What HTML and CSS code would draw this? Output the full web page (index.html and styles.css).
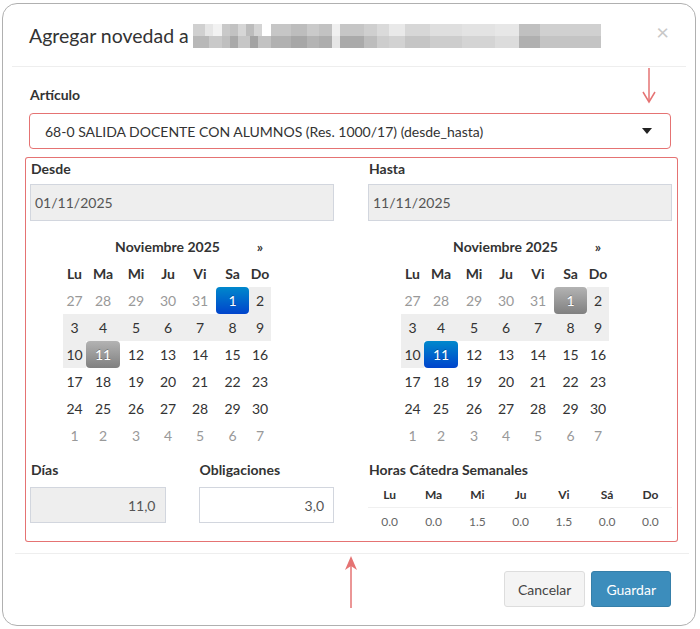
FILE: index.html
```html
<!DOCTYPE html>
<html lang="es">
<head>
    <meta charset="UTF-8">
    <title>Agregar novedad</title>
    <link rel="stylesheet" href="styles.css">
</head>
<body>

    <div class="modal">

        <!-- Header -->
        <div class="modal-header">
            <h4 class="modal-title">Agregar novedad a <span class="blurred"></span></h4>
            <span class="close">&times;</span>
        </div>

        <!-- Body -->
        <div class="modal-body">
            <label class="field-label">Artículo</label>
            <div class="select-box">
                <span>68-0 SALIDA DOCENTE CON ALUMNOS (Res. 1000/17) (desde_hasta)</span>
                <span class="caret"></span>
            </div>

            <div class="marked">
                <div class="cols">
                    <div class="col">
                        <label class="field-label">Desde</label>
                        <div class="input readonly">01/11/2025</div>
                        <div class="datepicker">
                            <div class="dp-switch">Noviembre 2025</div>
                            <div class="dp-next">&raquo;</div>
                            <div class="dow">Lu</div><div class="dow">Ma</div><div class="dow">Mi</div><div class="dow">Ju</div><div class="dow">Vi</div><div class="dow">Sa</div><div class="dow">Do</div>
                            <div class="day old">27</div><div class="day old">28</div><div class="day old">29</div><div class="day old">30</div><div class="day old">31</div><div class="day active">1</div><div class="day range">2</div>
                            <div class="day range">3</div><div class="day range">4</div><div class="day range">5</div><div class="day range">6</div><div class="day range">7</div><div class="day range">8</div><div class="day range">9</div>
                            <div class="day range">10</div><div class="day selected">11</div><div class="day">12</div><div class="day">13</div><div class="day">14</div><div class="day">15</div><div class="day">16</div>
                            <div class="day">17</div><div class="day">18</div><div class="day">19</div><div class="day">20</div><div class="day">21</div><div class="day">22</div><div class="day">23</div>
                            <div class="day">24</div><div class="day">25</div><div class="day">26</div><div class="day">27</div><div class="day">28</div><div class="day">29</div><div class="day">30</div>
                            <div class="day old">1</div><div class="day old">2</div><div class="day old">3</div><div class="day old">4</div><div class="day old">5</div><div class="day old">6</div><div class="day old">7</div>
                        </div>
                    </div>
                    <div class="col">
                        <label class="field-label">Hasta</label>
                        <div class="input readonly">11/11/2025</div>
                        <div class="datepicker">
                            <div class="dp-switch">Noviembre 2025</div>
                            <div class="dp-next">&raquo;</div>
                            <div class="dow">Lu</div><div class="dow">Ma</div><div class="dow">Mi</div><div class="dow">Ju</div><div class="dow">Vi</div><div class="dow">Sa</div><div class="dow">Do</div>
                            <div class="day old">27</div><div class="day old">28</div><div class="day old">29</div><div class="day old">30</div><div class="day old">31</div><div class="day selected">1</div><div class="day range">2</div>
                            <div class="day range">3</div><div class="day range">4</div><div class="day range">5</div><div class="day range">6</div><div class="day range">7</div><div class="day range">8</div><div class="day range">9</div>
                            <div class="day range">10</div><div class="day active">11</div><div class="day">12</div><div class="day">13</div><div class="day">14</div><div class="day">15</div><div class="day">16</div>
                            <div class="day">17</div><div class="day">18</div><div class="day">19</div><div class="day">20</div><div class="day">21</div><div class="day">22</div><div class="day">23</div>
                            <div class="day">24</div><div class="day">25</div><div class="day">26</div><div class="day">27</div><div class="day">28</div><div class="day">29</div><div class="day">30</div>
                            <div class="day old">1</div><div class="day old">2</div><div class="day old">3</div><div class="day old">4</div><div class="day old">5</div><div class="day old">6</div><div class="day old">7</div>
                        </div>
                    </div>
                </div>

                <div class="cols bottom">
                    <div class="col half-cols">
                        <div>
                            <label class="field-label">Días</label>
                            <div class="input readonly num">11,0</div>
                        </div>
                        <div>
                            <label class="field-label">Obligaciones</label>
                            <div class="input num">3,0</div>
                        </div>
                    </div>
                    <div class="col">
                        <label class="field-label">Horas Cátedra Semanales</label>
                        <table class="hours">
                            <tr><th>Lu</th><th>Ma</th><th>Mi</th><th>Ju</th><th>Vi</th><th>Sá</th><th>Do</th></tr>
                            <tr><td>0.0</td><td>0.0</td><td>1.5</td><td>0.0</td><td>1.5</td><td>0.0</td><td>0.0</td></tr>
                        </table>
                    </div>
                </div>
            </div>
        </div>

        <!-- Footer -->
        <div class="modal-footer">
            <button class="btn btn-default">Cancelar</button>
            <button class="btn btn-primary">Guardar</button>
        </div>

        <!-- Annotation arrows -->
        <svg class="arrow arrow-down" width="14" height="36" viewBox="0 0 14 36">
            <line x1="7" y1="0" x2="7" y2="34" stroke="#e57373" stroke-width="1.5"/>
            <polyline points="1,24 7,34 13,24" fill="none" stroke="#e57373" stroke-width="1.5"/>
        </svg>
        <svg class="arrow arrow-up" width="16" height="52" viewBox="0 0 16 52">
            <line x1="8" y1="4" x2="8" y2="52" stroke="#e57373" stroke-width="1.5"/>
            <polygon points="8,0 2,14 8,10 14,14" fill="#e57373"/>
        </svg>
    </div>

</body>
</html>
```

FILE: styles.css
```css
body {
    margin: 0;
    background-color: #fff;
    font-family: Lato, "Liberation Sans", sans-serif;
    color: #333;
    font-size: 14px;
}

.modal {
    position: relative;
    box-sizing: border-box;
    width: 694px;
    height: 623px;
    margin: 3px 0 0 2px;
    border: 1px solid #b0b0b0;
    border-radius: 15px;
    background: #fff;
}

.modal-header {
    position: relative;
    height: 62px;
    margin: 0 9px;
    padding: 0 17px;
    border-bottom: 1px solid #eee;
    display: flex;
    align-items: center;
}

.modal-title {
    margin: 0;
    font-size: 19.5px;
    font-weight: normal;
    color: #333;
    display: flex;
    align-items: center;
    gap: 4px;
}

/* pixelated (hidden) name */
.blurred {
    display: inline-block;
    width: 408px;
    height: 24px;
    margin-top: 2px;
    background:
        linear-gradient(90deg, #d0d0d0 0 3%, #e6e6e6 3% 5%, #f2f2f2 5% 7%, #c9c9c9 7% 9%, #c2c2c2 9% 11%, #d6d6d6 11% 13%, #bcbcbc 13% 15%, #d4d4d4 15% 17%, #fff 17% 19%, #c6c6c6 19% 24%, #bdbdbd 24% 28%, #cacaca 28% 31%, #c2c2c2 31% 34%, #f0f0f0 34% 36%, #c6c6c6 36% 42%, #cfcfcf 42% 45%, #dadada 45% 48%, #e9e9e9 48% 52%, #d7d7d7 52% 58%, #dfdfdf 58% 66%, #e3e3e3 66% 74%, #e7e7e7 74% 80%, #c0c0c0 80% 85%, #d0d0d0 85% 100%) top / 100% 50% no-repeat,
        linear-gradient(90deg, #b8b8b8 0 4%, #c9c9c9 4% 7%, #bfbfbf 7% 9%, #a9a9a9 9% 11%, #c6c6c6 11% 14%, #a3a3a3 14% 16%, #c2c2c2 16% 19%, #b1b1b1 19% 24%, #a7a7a7 24% 28%, #b4b4b4 28% 31%, #adadad 31% 34%, #e6e6e6 34% 36%, #aaaaaa 36% 42%, #bdbdbd 42% 45%, #cdcdcd 45% 48%, #d2d2d2 48% 52%, #c5c5c5 52% 58%, #cdcdcd 58% 66%, #d4d4d4 66% 74%, #dcdcdc 74% 80%, #b0b0b0 80% 85%, #c4c4c4 85% 100%) bottom / 100% 50% no-repeat;
}

.close {
    position: absolute;
    right: 17px;
    top: 17px;
    font-size: 22px;
    color: #c8c8c8;
    line-height: 1;
}

.modal-body {
    padding: 18px 22px 0 26px;
}

.field-label {
    display: block;
    font-weight: bold;
    font-size: 14px;
    line-height: 20px;
    margin-bottom: 8px;
    padding-left: 1px;
    color: #333;
}

.select-box {
    box-sizing: border-box;
    height: 36px;
    margin-right: 2px;
    border: 1px solid #e57373;
    border-radius: 4px;
    padding: 0 18px 0 15px;
    display: flex;
    align-items: center;
    justify-content: space-between;
    font-size: 14px;
    color: #333;
}

.caret {
    width: 0;
    height: 0;
    border-left: 5px solid transparent;
    border-right: 5px solid transparent;
    border-top: 6px solid #222;
}

/* red annotation frame around the dates */
.marked {
    margin: 9px -4px 0 -3px;
    padding: 0 5px 12px 4px;
    border-radius: 2px;
    box-shadow: 0 0 0 1px #e57373;
}

.cols {
    display: grid;
    grid-template-columns: 1fr 1fr;
    gap: 34px;
}

.marked .field-label {
    margin-bottom: 6px;
}

.marked > .cols:first-child .field-label {
    line-height: 20px;
    padding-top: 1px;
    margin-bottom: 5px;
}

.input {
    box-sizing: border-box;
    height: 37px;
    border: 1px solid #d2d6de;
    padding: 0 4px;
    display: flex;
    align-items: center;
    font-size: 14px;
    color: #555;
}

.input.readonly {
    background-color: #eee;
}

.input.num {
    justify-content: flex-end;
    padding-right: 9px;
    height: 36px;
}

/* Datepicker */
.datepicker {
    display: grid;
    grid-template-columns: 23px 34px 32px 32px 32px 33px 22px;
    grid-auto-rows: 27px;
    margin: 12px 0 0 33px;
    text-align: center;
}

.datepicker > div {
    display: flex;
    align-items: center;
    justify-content: center;
}

.dp-switch {
    grid-column: 2 / 7;
    font-weight: bold;
}

.dp-next {
    grid-column: 7;
    font-weight: bold;
}

.dow {
    font-weight: bold;
}

.day {
    font-size: 14px;
    color: #333;
}

.day.old {
    color: #999;
}

.day.range {
    background-color: #eee;
}

.day.active {
    color: #fff;
    border-radius: 4px;
    background-image: linear-gradient(to bottom, #0088cc, #0044cc);
    text-shadow: 0 -1px 0 rgba(0, 0, 0, 0.25);
}

.day.selected {
    color: #fff;
    border-radius: 4px;
    background-image: linear-gradient(to bottom, #b3b3b3, #808080);
    text-shadow: 0 -1px 0 rgba(0, 0, 0, 0.25);
}

.bottom {
    margin-top: 11px;
}

.half-cols {
    display: grid;
    grid-template-columns: 1fr 1fr;
    gap: 33px;
}

.bottom .field-label {
    margin-bottom: 7px;
}

.hours {
    width: 100%;
    border-collapse: collapse;
    margin-top: -4px;
}

.hours th {
    font-size: 12px;
    font-weight: bold;
    padding: 4px 0 5px;
    border-bottom: 1px solid #f0f0f0;
}

.hours td {
    font-size: 12px;
    color: #666;
    text-align: center;
    padding: 6px 0 0;
}

.modal-footer {
    position: absolute;
    left: 12px;
    right: 6px;
    bottom: 0;
    height: 72px;
    border-top: 1px solid #eee;
    display: flex;
    justify-content: flex-end;
    align-items: flex-start;
    gap: 6px;
    padding: 17px 18px 0 0;
    box-sizing: border-box;
}

.btn {
    height: 36px;
    padding: 0 14px;
    font-family: inherit;
    font-size: 14px;
    border-radius: 3px;
    cursor: pointer;
}

.btn-default {
    padding: 0 13px;
    background-color: #f4f4f4;
    border: 1px solid #ddd;
    color: #444;
}

.btn-primary {
    background-color: #3c8dbc;
    border: 1px solid #367fa9;
    color: #fff;
}

.arrow {
    position: absolute;
}

.arrow-down {
    left: 639px;
    top: 64px;
}

.arrow-up {
    left: 340px;
    top: 552px;
}
```
